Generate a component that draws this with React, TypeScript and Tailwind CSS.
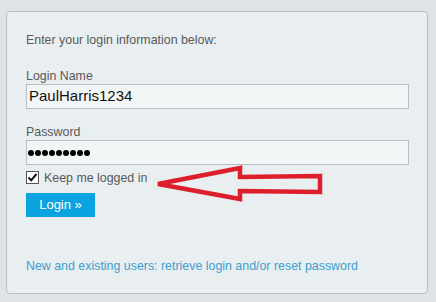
export default function App() {
  const font = { fontFamily: '"Liberation Sans", Arial, sans-serif' };

  return (
    <div className="w-[436px] h-[302px] bg-[#dfe3e6] pt-[11px] pl-[6px]" style={font}>
      {/* Login card */}
      <div className="relative w-[422px] h-[283px] rounded-[4px] border border-[#b8bfc4] bg-[#e9eef1] pl-[19px] pr-[18px] pt-[21px]">
        <p className="text-[12.4px] leading-[14px] text-[#585a5c]">Enter your login information below:</p>

        <label className="block mt-[22px] mb-[1px] text-[12.4px] leading-[14px] text-[#585a5c]">Login Name</label>
        <div className="h-[25px] border border-[#b9bfc4] bg-[#f3f6f7] px-[2px] flex items-center text-[15px] text-[#111]">
          PaulHarris1234
        </div>

        <label className="block mt-[16px] mb-[1px] text-[12.4px] leading-[14px] text-[#585a5c]">Password</label>
        <div className="h-[25px] border border-[#b9bfc4] bg-[#f3f6f7] px-[1px] flex items-center gap-[1px]">
          {Array.from({ length: 9 }).map((_, i) => (
            <span key={i} className="w-[6px] h-[6px] rounded-full bg-black" />
          ))}
        </div>

        <div className="mt-[6px] flex items-center h-[13px]">
          <span className="w-[13px] h-[13px] border border-[#555] bg-white flex items-center justify-center">
            <svg width="11" height="11" viewBox="0 0 11 11">
              <path d="M1.5 5.5 L4.2 8.3 L9.5 2" fill="none" stroke="#111" strokeWidth="2" />
            </svg>
          </span>
          <span className="ml-[5px] text-[12.4px] leading-[14px] text-[#585a5c]">Keep me logged in</span>
        </div>

        <button className="mt-[9px] w-[69px] h-[24px] bg-[#0ba2e0] text-white text-[13px] flex items-center justify-center">
          Login »
        </button>

        <a className="block mt-[42px] text-[12.4px] leading-[14px] text-[#3c9fcf]">
          New and existing users: retrieve login and/or reset password
        </a>

        {/* Red annotation arrow */}
        <svg className="absolute left-[143px] top-[149px]" width="174" height="42" viewBox="0 0 174 42">
          <polygon
            points="8,23 90,7 90,16 170,15 170,31 90,30 90,38"
            fill="none"
            stroke="#dc1f2b"
            strokeWidth="4.5"
            strokeLinejoin="miter"
          />
        </svg>
      </div>
    </div>
  );
}
